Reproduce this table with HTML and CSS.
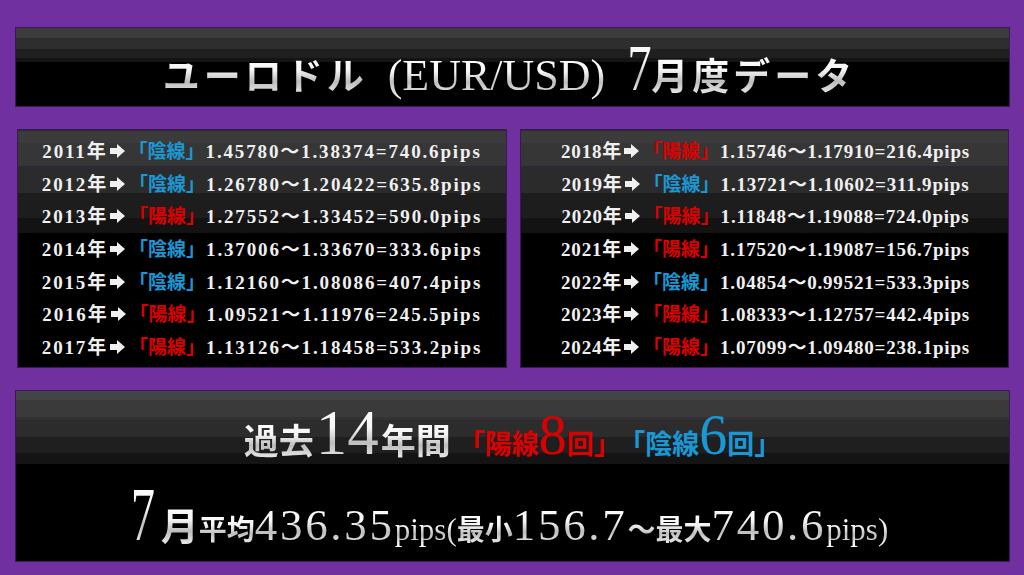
FILE: index.html
```html
<!DOCTYPE html>
<html lang="ja">
<head>
<meta charset="utf-8">
<title>ユーロドル（EUR/USD）7月度データ</title>
<link rel="stylesheet" href="styles.css">
</head>
<body>
<div class="page">
  <header class="panel title-panel">
    <h1 class="title"><span class="t-kana silver">ユーロドル</span><span class="t-paren silver">(EUR/USD)</span><span class="t-big silver">7</span><span class="t-kana silver">月度データ</span></h1>
  </header>

  <div class="tables">
    <section class="panel table-panel">
      <ul class="rows">
        <li>2011年<i class="arrow"></i><span class="neg">「陰線」</span>1.45780〜1.38374=740.6pips</li>
        <li>2012年<i class="arrow"></i><span class="neg">「陰線」</span>1.26780〜1.20422=635.8pips</li>
        <li>2013年<i class="arrow"></i><span class="pos">「陽線」</span>1.27552〜1.33452=590.0pips</li>
        <li>2014年<i class="arrow"></i><span class="neg">「陰線」</span>1.37006〜1.33670=333.6pips</li>
        <li>2015年<i class="arrow"></i><span class="neg">「陰線」</span>1.12160〜1.08086=407.4pips</li>
        <li>2016年<i class="arrow"></i><span class="pos">「陽線」</span>1.09521〜1.11976=245.5pips</li>
        <li>2017年<i class="arrow"></i><span class="pos">「陽線」</span>1.13126〜1.18458=533.2pips</li>
      </ul>
    </section>
    <section class="panel table-panel table-panel--narrow">
      <ul class="rows">
        <li>2018年<i class="arrow"></i><span class="pos">「陽線」</span>1.15746〜1.17910=216.4pips</li>
        <li>2019年<i class="arrow"></i><span class="neg">「陰線」</span>1.13721〜1.10602=311.9pips</li>
        <li>2020年<i class="arrow"></i><span class="pos">「陽線」</span>1.11848〜1.19088=724.0pips</li>
        <li>2021年<i class="arrow"></i><span class="pos">「陽線」</span>1.17520〜1.19087=156.7pips</li>
        <li>2022年<i class="arrow"></i><span class="neg">「陰線」</span>1.04854〜0.99521=533.3pips</li>
        <li>2023年<i class="arrow"></i><span class="pos">「陽線」</span>1.08333〜1.12757=442.4pips</li>
        <li>2024年<i class="arrow"></i><span class="pos">「陽線」</span>1.07099〜1.09480=238.1pips</li>
      </ul>
    </section>
  </div>

  <section class="panel summary">
    <p class="sum-line1"><span class="s-kanji silver">過去</span><span class="s-big silver">14</span><span class="s-kanji silver">年間</span><span class="pos s-small">「陽線<span class="s-num">8</span>回」</span><span class="neg s-small s-gap">「陰線<span class="s-num">6</span>回」</span></p>
    <p class="sum-line2"><span class="m-big silver">7</span><span class="m-kanji silver">月</span><span class="m-small silver">平均</span><span class="m-num silver">436.35</span><span class="m-pips silver">pips(</span><span class="m-small silver">最小</span><span class="m-num silver">156.7</span><span class="m-small silver">〜最大</span><span class="m-num silver">740.6</span><span class="m-pips silver">pips)</span></p>
  </section>
</div>
</body>
</html>
```

FILE: styles.css
```css
* { box-sizing: border-box; }

html, body {
  margin: 0;
  padding: 0;
  background: #7030a0;
}

body {
  width: 1024px;
  height: 575px;
  overflow: hidden;
  font-family: "Liberation Serif", "Noto Sans CJK JP", serif;
  color: #f2f2f2;
}

.page {
  padding: 27px 14px 0 15px;
  display: flex;
  flex-direction: column;
  gap: 22px;
}

.panel {
  border: 1px solid #3a1858;
  background: #000;
}

.silver {
  background-image: linear-gradient(180deg, #ffffff 0%, #f6f6f6 42%, #bdbdbd 64%, #ffffff 100%);
  -webkit-background-clip: text;
  background-clip: text;
  color: transparent;
}

/* ---------- title ---------- */
.title-panel {
  height: 80px;
  display: flex;
  align-items: center;
  justify-content: center;
  background: linear-gradient(180deg,
    #3c3c3c 0, #3c3c3c 10px,
    #2e2e2e 10px, #2e2e2e 21px,
    #1f1f1f 21px, #1f1f1f 30px,
    #141414 30px, #141414 34px,
    #000 34px);
}

.title {
  margin: 2px 0 0 -6px;
  line-height: 1;
  white-space: nowrap;
  font-weight: 400;
}

.t-kana {
  font-family: "Noto Sans CJK JP", sans-serif;
  font-weight: 700;
  font-size: 37px;
  letter-spacing: 4px;
}

.t-paren {
  font-family: "Liberation Serif", serif;
  font-size: 44px;
  margin: 0 24px 0 20px;
}

.t-big {
  display: inline-block;
  font-family: "Liberation Serif", serif;
  font-size: 66px;
  transform: scaleX(0.74);
  margin: 0 -5px 0 -6px;
}

/* ---------- tables ---------- */
.tables {
  display: grid;
  grid-template-columns: 490px 489px;
  gap: 13px;
  margin-left: 2px;
}

.table-panel {
  height: 239px;
  background: linear-gradient(180deg,
    #2a2a2a 0, #2a2a2a 1px,
    #3b3b3b 1px, #3b3b3b 13px,
    #363636 13px, #363636 36px,
    #2c2a31 36px, #2c2a31 40px,
    #2b2b2b 40px, #2b2b2b 63px,
    #1d1d1d 63px, #1d1d1d 88px,
    #131313 88px, #131313 103px,
    #000 103px);
}

.rows {
  list-style: none;
  margin: 0;
  padding: 6px 0 0;
}

.rows li {
  height: 32.7px;
  line-height: 32.7px;
  text-align: center;
  white-space: nowrap;
  font-weight: 700;
  font-size: 19px;
  letter-spacing: 1.85px;
  color: #f0f0f0;
}

.table-panel--narrow .rows li {
  letter-spacing: 0.8px;
  padding-left: 2px;
}

.arrow {
  display: inline-block;
  position: relative;
  width: 8px;
  height: 6px;
  background: #f0f0f0;
  margin: 0 11px 0 2px;
  vertical-align: 4px;
}

.arrow::after {
  content: "";
  position: absolute;
  left: 7px;
  top: -4px;
  border-left: 8px solid #f0f0f0;
  border-top: 7px solid transparent;
  border-bottom: 7px solid transparent;
}

.pos { color: #dc0000; }
.neg { color: #1a98d5; }

.rows .pos, .rows .neg {
  letter-spacing: 0;
  margin-right: 1px;
}

/* ---------- summary ---------- */
.summary {
  height: 172px;
  text-align: center;
  white-space: nowrap;
  background: linear-gradient(180deg,
    #444444 0, #444444 9px,
    #3a3a3a 9px, #3a3a3a 26px,
    #333036 26px, #333036 29px,
    #2c2c2c 29px, #2c2c2c 46px,
    #1f1f1f 46px, #1f1f1f 62px,
    #141414 62px, #141414 73px,
    #000 73px);
}

.sum-line1 {
  margin: 0;
  height: 80px;
  line-height: 85px;
  padding-left: 0;
}

.s-kanji {
  font-family: "Noto Sans CJK JP", sans-serif;
  font-weight: 700;
  font-size: 35px;
}

.s-big {
  font-family: "Liberation Serif", serif;
  font-size: 63px;
  margin: 0 2px;
}

.s-small {
  font-family: "Noto Sans CJK JP", sans-serif;
  font-weight: 700;
  font-size: 27px;
  margin-left: 7px;
}

.s-gap { margin-left: 11px; }

.s-num {
  font-family: "Liberation Serif", serif;
  font-weight: 400;
  font-size: 56px;
}

.sum-line2 {
  margin: 5px 0 0;
  height: 70px;
  line-height: 70px;
}

.m-big {
  display: inline-block;
  font-family: "Liberation Serif", serif;
  font-size: 76px;
  line-height: 1;
  transform: scaleX(0.64);
  margin: 0 -1px 0 -13px;
}

.m-kanji {
  font-family: "Noto Sans CJK JP", sans-serif;
  font-weight: 700;
  font-size: 38px;
}

.m-small {
  font-family: "Noto Sans CJK JP", sans-serif;
  font-weight: 700;
  font-size: 28px;
}

.m-num {
  font-family: "Liberation Serif", serif;
  font-size: 45px;
  letter-spacing: 2.7px;
}

.m-pips {
  font-family: "Liberation Serif", serif;
  font-size: 31px;
}
```
